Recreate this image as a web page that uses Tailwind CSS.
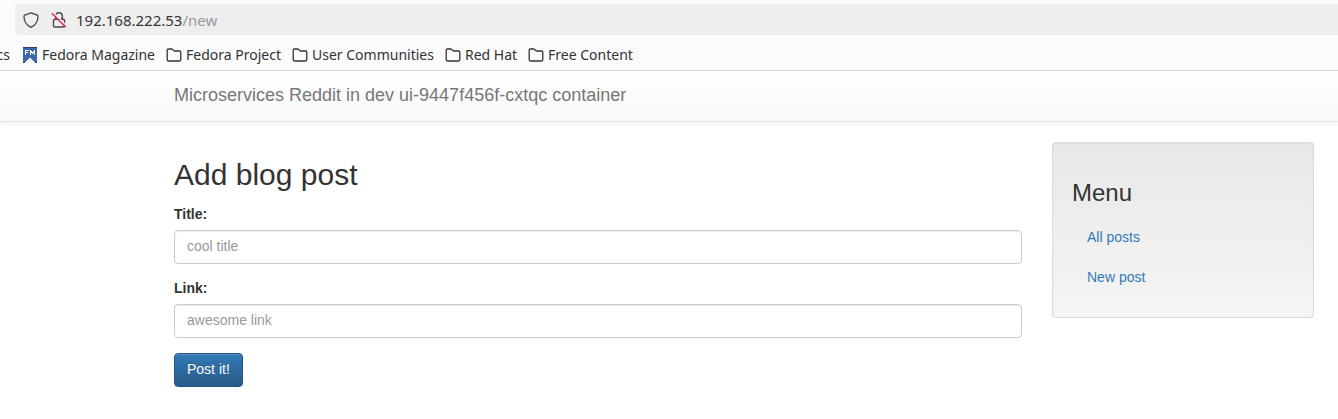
<!DOCTYPE html>
<html lang="en">
<head>
<meta charset="utf-8">
<meta name="viewport" content="width=device-width, initial-scale=1">
<title>Microservices Reddit</title>
<script src="https://cdn.jsdelivr.net/npm/@tailwindcss/browser@4"></script>
</head>
<body class="bg-white font-['Liberation_Sans',Arial,sans-serif] text-sm leading-5 text-[#333333]">

<svg class="hidden" aria-hidden="true">
  <symbol id="folder" viewBox="0 0 16 14">
    <path d="M1.200 11.300V2.200A1.200 1.200 0 0 1 2.400 1h3.200c.4 0 .7.100 1 .4l1.100 1.100c.3.300.6.500 1 .5h4.900a1.200 1.200 0 0 1 1.200 1.200v7.400a1.400 1.400 0 0 1-1.400 1.400H2.600a1.400 1.400 0 0 1-1.400-1.400z" fill="none" stroke="#333336" stroke-width="1.300"/>
  </symbol>
</svg>

<header class="border-b border-[#dcdcdc] bg-[#fbfbfb] pt-1 font-['Noto_Sans',sans-serif] text-[#333336]">
  <div class="ml-[15px] flex h-[31px] items-center rounded-l bg-[#eeeeee] pl-2">
    <svg class="mr-3 h-4 w-4 shrink-0" viewBox="0 0 16 16" fill="none" stroke="#48484c" stroke-width="1.300" stroke-linejoin="round" aria-hidden="true">
      <path d="M8 .9 14.300 3.200c.5.200.7.500.7 1 0 4.800-2.200 8.800-7 11.100C3.200 13 1 9 1 4.200c0-.5.200-.8.700-1L8 .9z"/>
    </svg>
    <svg class="mr-[9px] h-4 w-4 shrink-0" viewBox="0 0 16 16" fill="none" aria-hidden="true">
      <path d="M4.700 7V4a3.300 3.300 0 0 1 6.600 0v3M4 7.200h8.200c.8 0 1.300.5 1.300 1.300v5.200c0 .8-.5 1.300-1.300 1.300H3.800c-.8 0-1.300-.5-1.300-1.300V8.500C2.500 7.700 3 7.200 4 7.200z" stroke="#48484c" stroke-width="1.400"/>
      <path d="M2.300.4 16 14.200" stroke="#eeeeee" stroke-width="1.500"/>
      <path d="M.8 1.200 14.800 15.200" stroke="#e22850" stroke-width="1.400"/>
    </svg>
    <div class="text-[15px] leading-5">192.168.222.53<span class="text-[#98989b]">/new</span></div>
  </div>
  <nav aria-label="Bookmarks" class="flex h-[35px] items-center gap-[11px] overflow-hidden pt-1 text-[14px] leading-5 whitespace-nowrap">
    <a href="#" class="flex w-[10px] shrink-0 justify-end">cs</a>
    <a href="#" class="ml-px flex items-center gap-1">
      <svg class="h-4 w-4" viewBox="0 0 16 16" shape-rendering="crispEdges" aria-hidden="true">
        <path d="M1 0h14v16h-2v-1h-1v-1h-1v-1h-1v-1H9v-1H7v1H6v1H5v1H4v1H3v1H1z" fill="#3c68ad"/>
        <path d="M1 15h2v1H1zM13 15h2v1h-2zM1 0h14v1H1z" fill="#294172"/>
        <path d="M3 3h4v1H4v1h2v1H4v2H3zM8 3h1v1h1v1h1V4h1V3h1v5h-1V6h-1v1h-1V6H9v2H8z" fill="#fff"/>
      </svg>
      Fedora Magazine</a>
    <a href="#" class="flex items-center gap-1"><svg class="h-[14px] w-4" aria-hidden="true"><use href="#folder"/></svg>Fedora Project</a>
    <a href="#" class="flex items-center gap-1"><svg class="h-[14px] w-4" aria-hidden="true"><use href="#folder"/></svg>User Communities</a>
    <a href="#" class="flex items-center gap-1"><svg class="h-[14px] w-4" aria-hidden="true"><use href="#folder"/></svg>Red Hat</a>
    <a href="#" class="flex items-center gap-1"><svg class="h-[14px] w-4" aria-hidden="true"><use href="#folder"/></svg>Free Content</a>
  </nav>
</header>

<nav aria-label="Main" class="border-b border-[#e7e7e7] bg-linear-to-b from-white to-[#f8f8f8] pt-[14px] pb-4 pl-[174px] shadow-[inset_0_1px_0_rgba(255,255,255,.15),0_1px_5px_rgba(0,0,0,.075)]">
  <a href="#" class="block text-lg leading-5 text-[#777777]">Microservices Reddit in dev ui-9447f456f-cxtqc container</a>
</nav>

<main class="grid grid-cols-[1fr_262px] items-start gap-[30px] pt-5 pr-6 pl-[174px]">
  <form class="pt-4">
    <h2 class="mb-3 text-[30px] leading-[34px]">Add blog post</h2>
    <label for="title" class="mb-[6px] block font-bold">Title:</label>
    <input id="title" type="text" placeholder="cool title" class="mb-[14px] block h-[34px] w-full rounded border border-[#cccccc] bg-white px-3 pt-1 pb-[6px] shadow-[inset_0_1px_1px_rgba(0,0,0,.075)] placeholder:text-[#999999]">
    <label for="link" class="mb-[6px] block font-bold">Link:</label>
    <input id="link" type="text" placeholder="awesome link" class="mb-[15px] block h-[34px] w-full rounded border border-[#cccccc] bg-white px-3 pt-1 pb-[6px] shadow-[inset_0_1px_1px_rgba(0,0,0,.075)] placeholder:text-[#999999]">
    <button type="submit" class="block h-[34px] rounded border border-[#245580] bg-linear-to-b from-[#337ab7] to-[#265a88] px-3 pb-[2px] text-white shadow-[inset_0_1px_0_rgba(255,255,255,.15),0_1px_1px_rgba(0,0,0,.075)] text-shadow-[0_-1px_0_rgba(0,0,0,.2)]">Post it!</button>
  </form>

  <aside class="rounded-[3px] border border-[#dcdcdc] bg-linear-to-b from-[#e8e8e8] to-[#f5f5f5] px-[19px] pt-9 pb-5 shadow-[inset_0_1px_3px_rgba(0,0,0,.05),0_1px_0_rgba(255,255,255,.1)]">
    <h3 class="mb-[10px] text-2xl leading-[28px]">Menu</h3>
    <ul>
      <li><a href="#" class="block px-[15px] py-[10px] text-[#337ab7]">All posts</a></li>
      <li><a href="#" class="block px-[15px] py-[10px] text-[#337ab7]">New post</a></li>
    </ul>
  </aside>
</main>
</body>
</html>
